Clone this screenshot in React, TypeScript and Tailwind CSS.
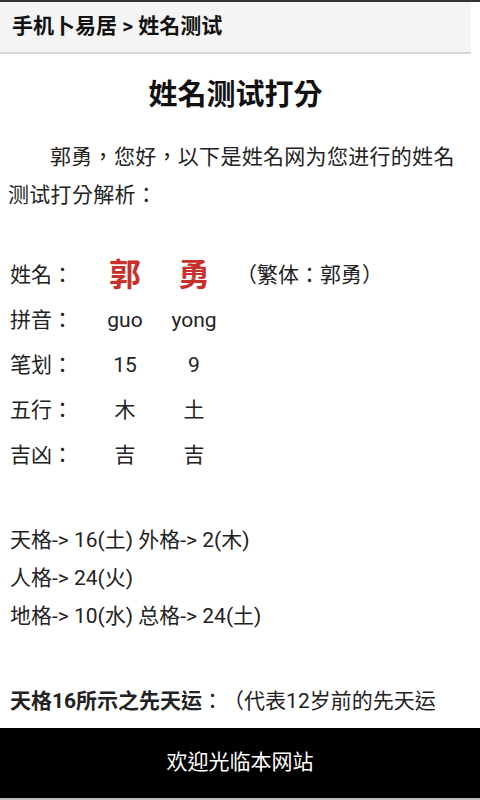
const rows = [
  { label: '拼音：', a: 'guo', b: 'yong' },
  { label: '笔划：', a: '15', b: '9' },
  { label: '五行：', a: '木', b: '土' },
  { label: '吉凶：', a: '吉', b: '吉' },
]

const App = () => {
  return (
    <div className="min-h-[800px] bg-white text-[#222] font-['Roboto','Noto_Sans_CJK_TC',sans-serif] [text-spacing-trim:space-all]">
      <div className="h-[2px] bg-[#333]" />
      <div className="w-[471px] h-[52px] bg-[#f5f5f5] border-b-2 border-[#d6d6d6] flex items-center pl-3">
        <span className="text-[21px] font-bold text-[#111]">手机卜易居 &gt; 姓名测试</span>
      </div>

      <div className="w-[471px]">
        <h1 className="mt-[21px] text-center text-[29px] leading-[40px] font-bold text-[#111]">姓名测试打分</h1>

        <div className="pl-2 pr-3 mt-[23px] text-[21px] leading-[38px]">
          <p className="indent-[42px] tracking-[0.3px]">郭勇，您好，以下是姓名网为您进行的姓名测试打分解析：</p>
          <div className="h-[38px]" />

          <div className="pl-[2px]">
            <div className="flex items-center h-[45px]">
              <div className="w-[80px]">姓名：</div>
              <div className="w-[70px] text-center text-[32px] font-bold text-[#c9302c]">郭</div>
              <div className="w-[68px] text-center text-[32px] font-bold text-[#c9302c]">勇</div>
              <div className="ml-[8px] text-[21px]">（繁体：郭勇）</div>
            </div>
            {rows.map((r) => (
              <div key={r.label} className="flex items-center h-[45px]">
                <div className="w-[80px]">{r.label}</div>
                <div className="w-[70px] text-center text-[21px]">{r.a}</div>
                <div className="w-[68px] text-center text-[21px]">{r.b}</div>
              </div>
            ))}
          </div>

          <div className="mt-[44px] text-[21px] leading-[38px] pl-[2px]">
            <p>天格-&gt; 16(土) 外格-&gt; 2(木)</p>
            <p>人格-&gt; 24(火)</p>
            <p>地格-&gt; 10(水) 总格-&gt; 24(土)</p>
          </div>

          <p className="mt-[47px] text-[21px] leading-[38px] pl-[2px] pr-[14px]">
            <span className="font-bold">天格16所示之先天运</span>：（代表12岁前的先天运势，以及先天所赋予的身心基础）
          </p>
        </div>
      </div>

      <div className="fixed bottom-0 left-0 right-0 h-[72px] bg-black border-b-2 border-[#bdbdbd] flex items-center justify-center">
        <span className="text-white text-[21px]">欢迎光临本网站</span>
      </div>
    </div>
  )
}

export default App
